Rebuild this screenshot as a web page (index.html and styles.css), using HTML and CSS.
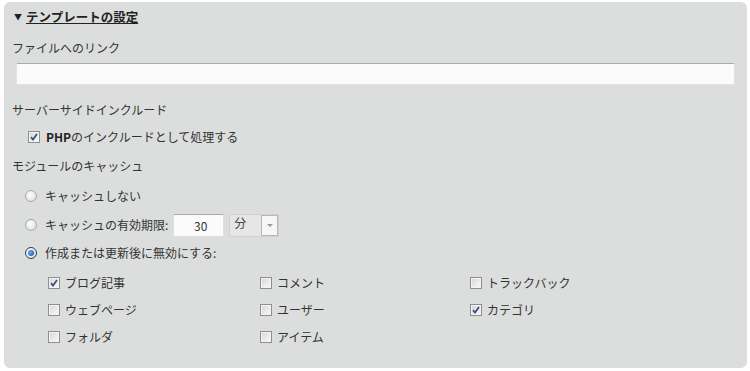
FILE: index.html
```html
<!DOCTYPE html>
<html lang="ja">
<head>
<meta charset="utf-8">
<link rel="stylesheet" href="styles.css">
</head>
<body>
<div class="panel">
  <div class="head"><span class="tri">▼</span><span class="title">テンプレートの設定</span></div>
  <div class="label l1">ファイルへのリンク</div>
  <div class="textfield"></div>
  <div class="label l2">サーバーサイドインクルード</div>
  <div class="row php"><span class="cb on"><svg viewBox="0 0 8 8"><path d="M1 4.2 L3 6.5 L7 1" /></svg></span><span><b>PHP</b>のインクルードとして処理する</span></div>
  <div class="label l3">モジュールのキャッシュ</div>
  <div class="row r1"><span class="radio"></span><span>キャッシュしない</span></div>
  <div class="row r2"><span class="radio"></span><span>キャッシュの有効期限:</span><span class="num">30</span><span class="sel"><span class="selv">分</span><span class="arrow"><svg viewBox="0 0 8 5"><path d="M1 1 L7 1 L4 4 Z"/></svg></span></span></div>
  <div class="row r3"><span class="radio on"></span><span>作成または更新後に無効にする:</span></div>
  <div class="grid">
    <div class="item"><span class="cb on"><svg viewBox="0 0 8 8"><path d="M1 4.2 L3 6.5 L7 1" /></svg></span><span>ブログ記事</span></div>
    <div class="item"><span class="cb"></span><span>コメント</span></div>
    <div class="item"><span class="cb"></span><span>トラックバック</span></div>
    <div class="item"><span class="cb"></span><span>ウェブページ</span></div>
    <div class="item"><span class="cb"></span><span>ユーザー</span></div>
    <div class="item"><span class="cb on"><svg viewBox="0 0 8 8"><path d="M1 4.2 L3 6.5 L7 1" /></svg></span><span>カテゴリ</span></div>
    <div class="item"><span class="cb"></span><span>フォルダ</span></div>
    <div class="item"><span class="cb"></span><span>アイテム</span></div>
  </div>
</div>
</body>
</html>
```

FILE: styles.css
```css
html, body { margin: 0; padding: 0; background: #ffffff; }
body {
  font-family: "Noto Sans CJK JP", "Noto Sans", sans-serif;
  font-size: 12px;
  line-height: 16px;
  color: #333;
}
.panel {
  margin: 2px 3px 0 4px;
  height: 366px;
  box-sizing: border-box;
  background: #dcdedd;
  border-radius: 6px;
  padding: 7px 8px 0 8px;
  display: flex;
  flex-direction: column;
}
.head { display: flex; align-items: center; height: 16px; margin-left: 2px; }
.tri { font-size: 8px; color: #222; margin-right: 4px; line-height: 16px; }
.title { font-weight: bold; color: #222; text-decoration: underline; font-size: 12.5px; }
.label { height: 16px; }
.l1 { margin-top: 15px; }
.textfield {
  margin: 7px 4px 0 4px;
  height: 22px;
  box-sizing: border-box;
  background: #fbfbfb;
  border: 1px solid #e2e2e2;
  border-top-color: #aaaaaa;
  border-radius: 2px;
}
.l2 { margin-top: 17px; }
.row { display: flex; align-items: center; height: 16px; }
.php { margin-top: 11px; padding-left: 16px; }
.php .cb { margin-right: 6px; }
.php b { color: #222; }
.l3 { margin-top: 13px; }
.r1 { margin-top: 14px; padding-left: 13px; }
.r2 { margin-top: 13px; padding-left: 13px; }
.r3 { margin-top: 12px; padding-left: 13px; }
.radio {
  width: 12px; height: 12px; box-sizing: border-box;
  border-radius: 50%;
  border: 1px solid #a9a9a9;
  background: radial-gradient(circle at 40% 40%, #ffffff 0%, #e8e8e8 60%, #cfcfcf 100%);
  margin-right: 8px;
  position: relative;
  flex: none;
}
.radio.on { border-color: #2a3c5a; }
.radio.on::after {
  content: ""; position: absolute; left: 2px; top: 2px; width: 6px; height: 6px;
  border-radius: 50%;
  background: radial-gradient(circle at 40% 40%, #6fb4ef 0%, #1a63b8 70%, #0d3f80 100%);
}
.num {
  margin-left: 5px;
  width: 51px; height: 23px; box-sizing: border-box;
  background: #fbfbfb;
  border: 1px solid #e0e0e0;
  border-top-color: #aaaaaa;
  border-radius: 2px;
  text-align: right;
  padding-right: 16px;
  line-height: 21px;
}
.sel {
  margin-left: 5px;
  width: 50px; height: 23px; box-sizing: border-box;
  border: 1px solid #d0d0d0;
  background: #e6e6e6;
  display: flex;
  position: relative;
}
.selv { flex: 1; padding-left: 4px; line-height: 16px; color: #444; }
.arrow {
  width: 17px; height: 21px; box-sizing: border-box;
  border: 1px solid #b8b8b8;
  background: #f6f6f6;
  display: flex; align-items: center; justify-content: center;
  margin: 0 0 0 0;
}
.arrow svg { width: 8px; height: 5px; fill: #999; }
.grid {
  margin-top: 14px;
  padding-left: 36px;
  display: grid;
  grid-template-columns: 212px 210px 200px;
  row-gap: 11px;
}
.item { display: flex; align-items: center; height: 16px; }
.cb {
  width: 12px; height: 12px; box-sizing: border-box;
  border: 1px solid #8e8e8e;
  background: linear-gradient(135deg, #d6d6d6 0%, #ececec 60%, #f8f8f8 100%);
  box-shadow: inset 0 0 0 1px #f4f4f4;
  margin-right: 5px;
  flex: none;
  display: flex; align-items: center; justify-content: center;
}
.cb svg { width: 8px; height: 8px; fill: none; stroke: #3a4f8c; stroke-width: 1.8; }
```
